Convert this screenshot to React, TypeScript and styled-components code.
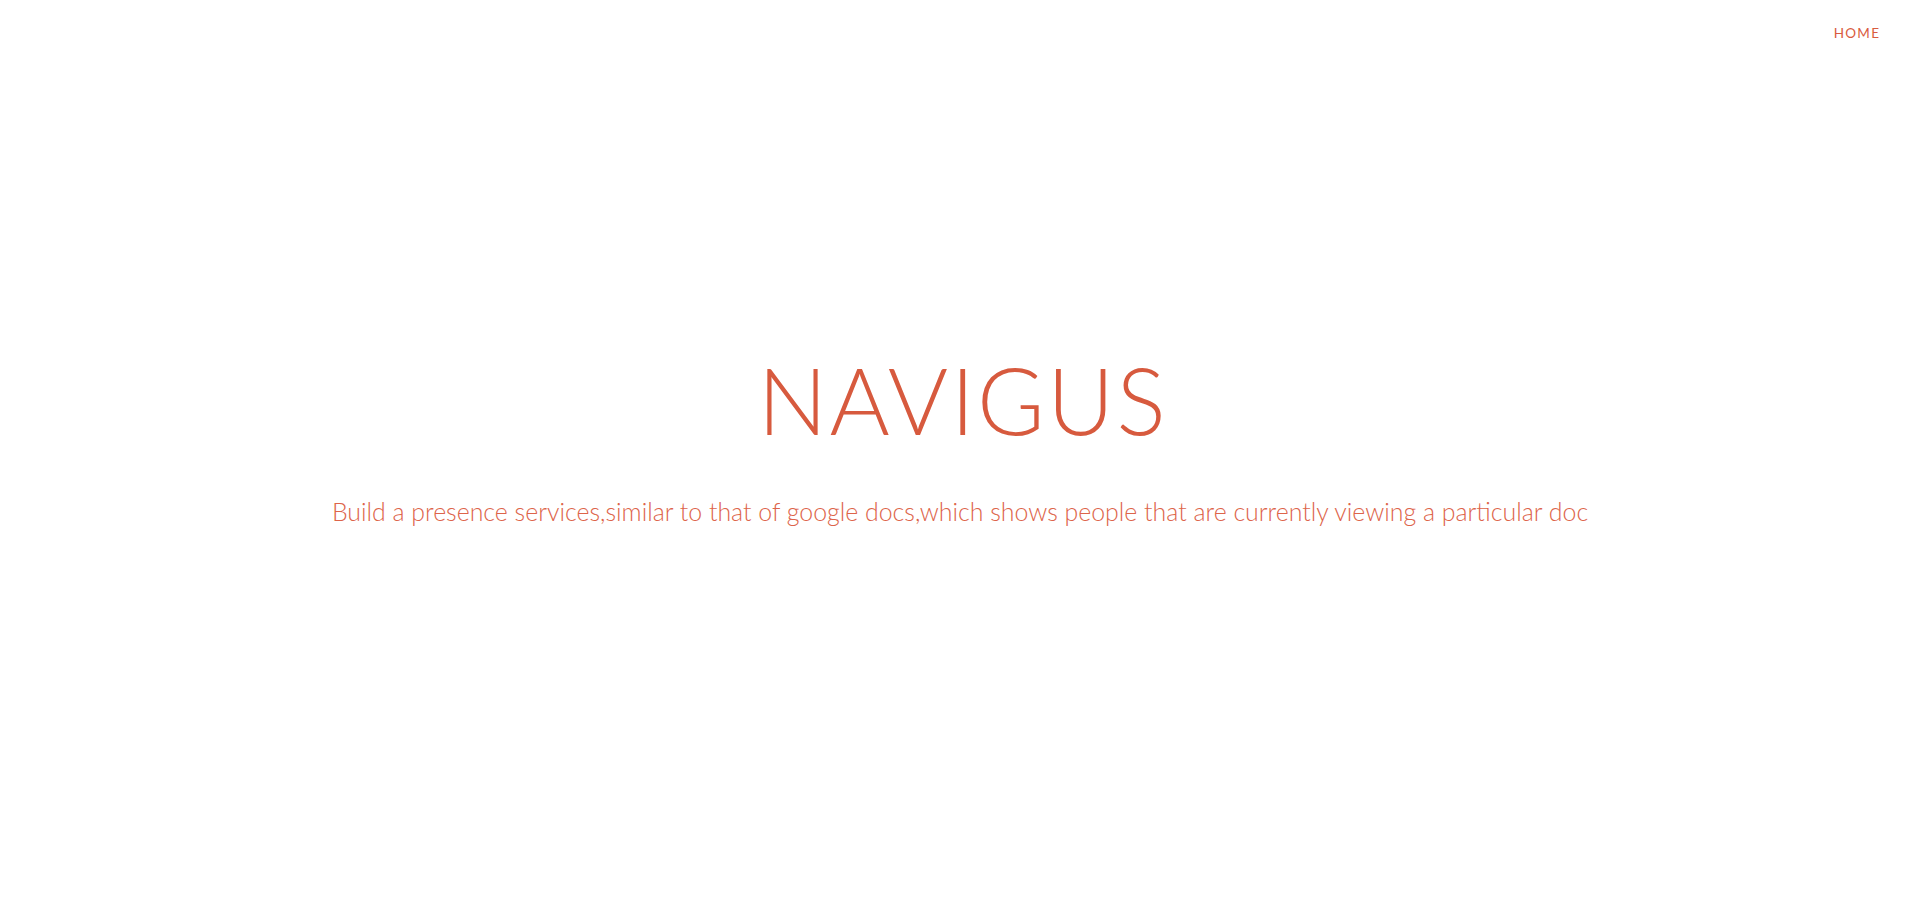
import React from "react";
import styled, { createGlobalStyle } from "styled-components";

const GlobalStyle = createGlobalStyle`
  html, body {
    margin: 0;
    padding: 0;
    background: #ffffff;
  }
  body {
    font-family: Lato, "Open Sans", sans-serif;
    -webkit-font-smoothing: antialiased;
  }
  * { box-sizing: border-box; }
`;

const Page = styled.div`
  min-height: 100vh;
  display: flex;
  flex-direction: column;
`;

const NavBar = styled.nav`
  display: flex;
  justify-content: flex-end;
  align-items: flex-start;
  padding: 27px 41px 0 0;
  height: 60px;
`;

const NavLink = styled.a`
  font-family: Lato, sans-serif;
  font-weight: 400;
  font-size: 13.5px;
  line-height: 1;
  letter-spacing: 1.3px;
  margin-right: -1.3px;
  color: #d95b40;
  text-decoration: none;
  text-transform: uppercase;
  cursor: pointer;
`;

const Hero = styled.main`
  display: flex;
  flex-direction: column;
  align-items: center;
  padding-top: 294px;
`;

const Title = styled.h1`
  margin: 0;
  padding-left: 6px;
  font-family: Lato, sans-serif;
  font-weight: 300;
  font-size: 92px;
  line-height: 1;
  letter-spacing: 2.5px;
  color: #d75a3e;
`;

const Subtitle = styled.p`
  margin: 53px 0 0;
  font-family: Lato, sans-serif;
  font-weight: 300;
  font-size: 24.9px;
  line-height: 1;
  color: #dd644a;
`;

export default function App() {
  return (
    <>
      <GlobalStyle />
      <Page>
        <NavBar>
          <NavLink>Home</NavLink>
        </NavBar>
        <Hero>
          <Title>NAVIGUS</Title>
          <Subtitle>
            Build a presence services,similar to that of google docs,which shows people that are currently viewing a particular doc
          </Subtitle>
        </Hero>
      </Page>
    </>
  );
}
